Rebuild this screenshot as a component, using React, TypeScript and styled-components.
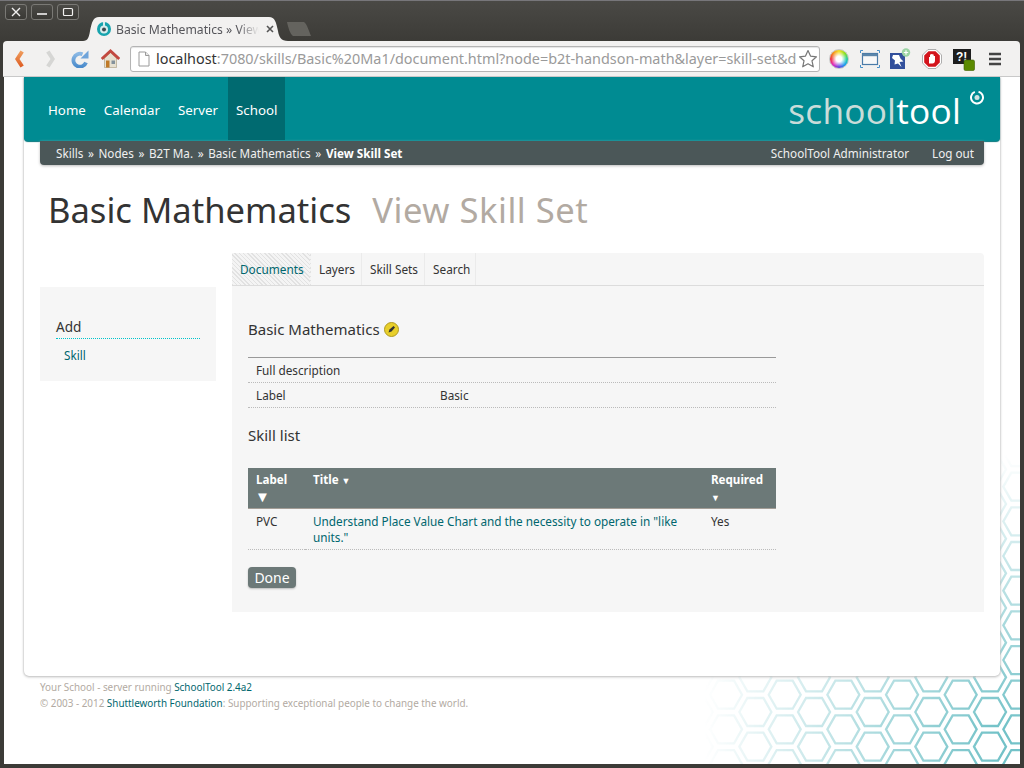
import React from 'react';
import styled, { createGlobalStyle } from 'styled-components';

const FONT = `"Noto Sans", "Open Sans", sans-serif`;

const Global = createGlobalStyle`
  html, body { margin: 0; padding: 0; background: #3c3b37; }
  body { font-family: ${FONT}; overflow: hidden; }
  * { box-sizing: border-box; }
`;

const Win = styled.div`
  width: 1024px; height: 768px; display: flex; flex-direction: column;
  background: linear-gradient(#4a4945 0, #3c3b37 40px);
  border-top: 1px solid #77767a; padding: 0 4px 4px 3px; overflow: hidden;
`;
const TitleBar = styled.div`
  height: 40px; display: flex; position: relative; flex: none;
`;
const WinButtons = styled.div`
  display: flex; gap: 4px; padding: 3px 0 0 2px; align-items: flex-start; width: 80px;
`;
const WinBtn = styled.div`
  width: 22px; height: 16px; border: 1px solid #7a7975; border-radius: 3px;
  background: linear-gradient(#4b4a46, #3a3935); display: flex; align-items: center; justify-content: center;
`;
const Tab = styled.div`
  width: 205px; height: 24px; margin-top: 16px; background: #f2f1f0; display: flex; align-items: center;
  padding-left: 14px; color: #55555a; font-size: 12.2px; white-space: nowrap;
  clip-path: path('M0 24 C5 24 6 20 7 14 C9 5 10 0 16 0 L186 0 C192 0 193 5 195 14 C196 20 198 24 205 24 Z');
`;
const TabTitle = styled.span`
  width: 143px; margin-left: 5px; overflow: hidden;
  -webkit-mask-image: linear-gradient(to right, #000 85%, transparent);
  mask-image: linear-gradient(to right, #000 85%, transparent);
`;
const TabClose = styled.div`
  margin-left: 7px; display: flex;
`;
const NewTab = styled.div`
  width: 24px; height: 14px; margin-top: 21px; margin-left: -1px; background: #64635e;
  clip-path: path('M0 0 L17 0 C20 2 22 9 24 14 L6 14 C3 12 1 5 0 0 Z');
`;
const Toolbar = styled.div`
  height: 36px; flex: none; background: #f2f1f0; border-radius: 4px 4px 0 0; display: flex; align-items: center;
  padding: 0 0 0 2px; border-bottom: 1px solid #c9c9c9;
`;
const NavIcons = styled.div`
  display: flex; width: 125px; align-items: center;
`;
const NavIcon = styled.div`
  width: 30px; height: 22px; display: flex; align-items: center; justify-content: center; flex: none;
`;
const Omnibox = styled.div`
  width: 690px; height: 26px; background: #fff; border: 1px solid #b4b4b4; border-radius: 3px;
  display: flex; align-items: center; padding-left: 7px; flex: none; box-shadow: inset 0 1px 1px #e4e4e4;
`;
const Url = styled.div`
  width: 641px; margin-left: 6px; overflow: hidden; white-space: nowrap; font-size: 14.4px; color: #9a9a9a; flex: none;
`;
const UrlHost = styled.span`
  color: #333;
`;
const StarWrap = styled.div`
  margin-left: 1px; display: flex;
`;
const ExtIcons = styled.div`
  display: flex; align-items: center; padding-left: 3px;
`;
const ExtIcon = styled.div`
  width: 31.2px; height: 24px; display: flex; align-items: center; justify-content: center; flex: none; position: relative;
`;
const Wheel = styled.div`
  width: 20px; height: 20px; border-radius: 50%;
  background: radial-gradient(circle, #fff 0 22%, transparent 62%), conic-gradient(#f5e020, #8ee020, #20d0a0, #20a0f0, #6040e0, #e030c0, #f03040, #f59020, #f5e020);
  border: 1px solid #c8c8c8;
`;
const Viewport = styled.div`
  flex: 1; background: #fff; position: relative; overflow: hidden; padding: 0 20px 0 20px;
  margin-left: 1px;
`;
const HexLayer = styled.svg`
  position: absolute; right: 0; bottom: 0; width: 316px; height: 310px;
  -webkit-mask-image: linear-gradient(to right, transparent 0, rgba(0,0,0,.95) 92%), linear-gradient(to bottom, transparent 0, #000 88%);
  -webkit-mask-composite: source-in;
  mask-image: linear-gradient(to right, transparent 0, rgba(0,0,0,.95) 92%), linear-gradient(to bottom, transparent 0, #000 88%);
  mask-composite: intersect;
`;
const Card = styled.div`
  position: relative; height: 599px; background: #fff; border-radius: 0 0 5px 5px;
  box-shadow: 0 0 2px #b8b8b8, 0 1px 3px #c4c4c4; padding: 0;
`;
const Header = styled.header`
  height: 64px; background: #008b92; border-radius: 0 0 4px 4px; display: flex; justify-content: space-between;
  box-shadow: 0 1px 1px #00757a; padding-left: 16px;
`;
const Nav = styled.nav`
  display: flex; gap: 2px;
`;
const NavItem = styled.a<{ $active?: boolean }>`
  height: 63px; display: flex; align-items: center; padding: 2px 8px 0; color: #fff; font-size: 13.3px;
  background: ${p => (p.$active ? '#006a70' : 'transparent')};
`;
const Logo = styled.div`
  display: flex; align-items: flex-start; padding-right: 15px; padding-top: 9px;
`;
const LogoText = styled.div`
  font-size: 35.3px; font-weight: 400; color: #fff; line-height: 48px; letter-spacing: .2px; font-family: "Open Sans", ${FONT};
`;
const LogoLight = styled.span`
  color: #c9dcd9;
`;
const LogoMark = styled.svg`
  width: 16px; height: 16px; margin: 3px 0 0 8px;
`;
const SubBar = styled.div`
  height: 24px; margin: 0 16px; background: #4b5758; border-radius: 0 0 4px 4px; display: flex; justify-content: space-between;
  align-items: center; padding: 0 10px 0 16px; color: #f0f0f0; font-size: 11.7px; box-shadow: 0 1px 3px #bbb;
`;
const Crumbs = styled.div`
  display: flex; gap: 4.6px;
`;
const Crumb = styled.span<{ $bold?: boolean }>`
  font-weight: ${p => (p.$bold ? 700 : 400)}; ${p => (p.$bold ? 'color:#fff;' : '')}
`;
const UserBox = styled.div`
  display: flex; gap: 23px;
`;
const TitleRow = styled.h1`
  margin: 0; height: 88px; padding: 22px 0 0 24px; display: flex; gap: 21px; font-weight: 400; font-size: 34.6px; color: #333; line-height: 46px;
`;
const TitleSub = styled.span`
  color: #b2aaa2; letter-spacing: .5px;
`;
const Columns = styled.div`
  display: flex; gap: 16px; padding: 0 16px;
`;
const Sidebar = styled.aside`
  width: 176px; height: 94px; margin-top: 34px; background: #f6f6f6; padding: 30px 16px 0;
`;
const SideTitle = styled.div`
  font-size: 13.6px; color: #333; line-height: 20px; padding-bottom: 1px; border-bottom: 1px dotted #00c4cc;
`;
const SideLink = styled.a`
  display: block; font-size: 11.7px; color: #00666e; padding: 8px 0 0 8px; line-height: 17px;
`;
const Content = styled.main`
  width: 752px; height: 359px; background: #f6f6f6; border-radius: 4px 4px 0 0;
`;
const Tabs = styled.div`
  display: flex; height: 33px; border-bottom: 1px solid #dcdcdc;
`;
const TabItem = styled.a<{ $active?: boolean; $w: number }>`
  width: ${p => p.$w}px; display: flex; align-items: center; padding-left: 8px; font-size: 11.8px; color: ${p => (p.$active ? '#00666e' : '#333')};
  border-right: 1px solid ${p => (p.$active ? 'transparent' : '#ebebeb')};
  background: ${p => (p.$active ? 'repeating-linear-gradient(45deg, #e2e2e2 0 1px, #f4f4f4 1px 3px)' : 'transparent')};
`;
const Body = styled.div`
  padding: 0 16px; width: 560px;
`;
const DocHeading = styled.h2`
  margin: 0; padding-top: 32px; height: 71px; display: flex; align-items: flex-start; gap: 4px; font-size: 15px; font-weight: 400; color: #333; line-height: 22px;
`;
const Pencil = styled.svg`
  width: 15px; height: 15px; margin-top: 4px;
`;
const Details = styled.div`
  border-top: 1px solid #999;
`;
const DetailRow = styled.div`
  display: grid; grid-template-columns: 184px 1fr; height: 25px; align-items: center; padding-left: 8px; font-size: 11.75px; color: #333;
  border-bottom: 1px dotted #bbb;
`;
const SkillHeading = styled.h3`
  margin: 0; height: 60px; padding-top: 16px; font-size: 15px; font-weight: 400; color: #333; line-height: 22px;
`;
const SkillGrid = styled.div`
  display: grid; grid-template-columns: 57px 398px 73px;
`;
const Th = styled.div`
  height: 41px; background: #6c7978; border-bottom: 1px solid #a39d96; padding: 3px 8px 0; color: #fff; font-weight: 700; font-size: 11.6px; line-height: 17px;
`;
const Td = styled.div`
  height: 41px; padding: 4px 8px 0; font-size: 11.75px; line-height: 16px; color: #333; border-bottom: 1px dotted #bbb;
`;
const SkillLink = styled.a`
  color: #00666e;
`;
const BigArrow = styled.span`
  display: block; font-size: 15px; line-height: 16px; font-weight: 400; margin-left: -1px;
`;
const SmallArrow = styled.span`
  font-size: 9px;
`;
const DoneButton = styled.button`
  display: block; margin-top: 17px; width: 48px; height: 21px; padding: 0; border: 0; border-radius: 4px; background: #6c7978; color: #fff;
  font: 400 14px ${FONT}; box-shadow: 0 1px 2px #bbb;
`;
const Footer = styled.footer`
  position: relative; padding: 3px 0 0 16px; font-size: 9.9px; line-height: 16px; color: #b2aaa2;
`;
const FootLink = styled.a`
  color: #00666e;
`;

const hexPts = (cx: number, cy: number) =>
  [[-16, 0], [-8, -14], [8, -14], [16, 0], [8, 14], [-8, 14]].map(([x, y]) => `${x + cx},${y + cy}`).join(' ');

const hexes: [number, number][] = [];
for (let c = -10; c <= 2; c++) {
  for (let r = -2; r <= 10; r++) {
    const x = 286 + c * 29.33;
    const y = 258 + (c % 2 === 0 ? 0 : -17.3) + (r - 7) * 34.67;
    hexes.push([x, y]);
  }
}

export default function App() {
  return (
    <>
      <Global />
      <Win>
        <TitleBar>
          <WinButtons>
            <WinBtn><svg width="10" height="10" viewBox="0 0 10 10"><path d="M1 1l8 8M9 1l-8 8" stroke="#f2f1f0" strokeWidth="1.4" /></svg></WinBtn>
            <WinBtn><svg width="10" height="10" viewBox="0 0 10 10"><path d="M0 7h10" stroke="#f2f1f0" strokeWidth="1.6" /></svg></WinBtn>
            <WinBtn><svg width="12" height="10" viewBox="0 0 12 10"><rect x="1.5" y="1.5" width="9" height="7" rx="1" fill="none" stroke="#f2f1f0" strokeWidth="1.2" /></svg></WinBtn>
          </WinButtons>
          <Tab>
            <svg width="14" height="14" viewBox="0 0 14 14"><circle cx="7" cy="7" r="7" fill="#17a3ad" /><circle cx="7" cy="7.5" r="4" fill="#d7ecec" /><circle cx="7" cy="7.5" r="2" fill="#3d4a50" /><rect x="6" y="0" width="2" height="4" fill="#d7ecec" /></svg>
            <TabTitle>Basic Mathematics » View Skill Set</TabTitle>
            <TabClose><svg width="8" height="8" viewBox="0 0 8 8"><path d="M1 1l6 6M7 1l-6 6" stroke="#555" strokeWidth="1.6" /></svg></TabClose>
          </Tab>
          <NewTab />
        </TitleBar>
        <Toolbar>
          <NavIcons>
            <NavIcon>
              <svg width="12" height="18" viewBox="0 0 12 18">
                <defs><linearGradient id="bk" x1="0" y1="0" x2="0" y2="1"><stop offset="0" stopColor="#f0a060" /><stop offset="1" stopColor="#dd5a20" /></linearGradient></defs>
                <path d="M6.500 0.500L9.800 2.500 5.500 9l4.300 6.500-3.300 2L1 9z" fill="url(#bk)" />
              </svg>
            </NavIcon>
            <NavIcon>
              <svg width="12" height="18" viewBox="0 0 12 18"><path d="M5.500 0.500L2.200 2.500 6.500 9l-4.300 6.500 3.300 2L11 9z" fill="#d6d6d4" /></svg>
            </NavIcon>
            <NavIcon>
              <svg width="18" height="19" viewBox="0 0 18 19">
                <defs><linearGradient id="rl" x1="0" y1="0" x2="0" y2="1"><stop offset="0" stopColor="#8ab8e4" /><stop offset="1" stopColor="#4c8ccc" /></linearGradient></defs>
                <path d="M15 13.500A6.500 6.500 0 1 1 11.500 5.200" fill="none" stroke="url(#rl)" strokeWidth="3.800" />
                <path d="M9.500 9.500h8V1.500z" fill="#6fa4da" />
              </svg>
            </NavIcon>
            <NavIcon>
              <svg width="19" height="19" viewBox="0 0 19 19"><path d="M3.500 9v9.500h12V9L9.500 3.500z" fill="#e6e0d0" stroke="#a89878" strokeWidth=".6" /><path d="M0.800 10L9.500 2l8.700 8" fill="none" stroke="#c2493f" strokeWidth="2.800" /><rect x="5" y="11.500" width="3.500" height="7" fill="#c07a28" /><rect x="10.500" y="11.500" width="3.500" height="3.500" fill="#84929c" /></svg>
            </NavIcon>
          </NavIcons>
          <Omnibox>
            <svg width="12" height="16" viewBox="0 0 12 16"><path d="M1 1h6.500L11 4.500V15H1z" fill="#fff" stroke="#9a9a9a" /><path d="M7.500 1v3.500H11" fill="#e8e8e8" stroke="#9a9a9a" /></svg>
            <Url><UrlHost>localhost</UrlHost>:7080/skills/Basic%20Ma1/document.html?node=b2t-handson-math&amp;layer=skill-set&amp;do</Url>
            <StarWrap>
              <svg width="20" height="19" viewBox="0 0 20 19"><path d="M10 1.500l2.500 5.600 6 .7-4.500 4 1.300 6L10 14.800l-5.300 3 1.300-6-4.500-4 6-.7z" fill="#fff" stroke="#777" strokeWidth="1.200" strokeLinejoin="round" /></svg>
            </StarWrap>
          </Omnibox>
          <ExtIcons>
            <ExtIcon><Wheel /></ExtIcon>
            <ExtIcon>
              <svg width="20" height="18" viewBox="0 0 20 18"><rect x="2.500" y="3.500" width="15" height="11" fill="#f8f8f8" stroke="#4a7ba8" strokeWidth="1.200" /><path d="M2.500 5h15" stroke="#5b86ab" strokeWidth="2.400" /><path d="M0.500 3V.5H3M17 .5h2.500V3M.5 15v2.500H3M17 17.500h2.500V15" fill="none" stroke="#4a90c8" /></svg>
            </ExtIcon>
            <ExtIcon>
              <svg width="21" height="21" viewBox="0 0 21 21"><rect x="0" y="5" width="15" height="16" fill="#33509c" /><path d="M3 7l6 0 1.500 3.500 3 3-4 .5 2 5-3.500-3.500-3.500 1 .5-4L2 10z" fill="#fff" /><circle cx="16" cy="4.500" r="4.200" fill="#9cd4a4" /><path d="M16 2.300v4.400M13.800 4.500h4.400" stroke="#fff" strokeWidth="1.200" /></svg>
            </ExtIcon>
            <ExtIcon>
              <svg width="20" height="20" viewBox="0 0 20 20"><path d="M6 .5h8L19.500 6v8L14 19.500H6L.5 14V6z" fill="#fff" stroke="#9a9a9a" strokeWidth=".8" /><path d="M6.500 2.200h7L17.800 6.500v7L13.500 17.800h-7L2.200 13.500v-7z" fill="#d3141c" /><path d="M7 14.500V8h1V5.500h1.200V5h1.300v.5h1.200V7h1.300v4.500c0 2-1 3-2.500 3z" fill="#fff" /></svg>
            </ExtIcon>
            <ExtIcon>
              <svg width="24" height="24" viewBox="0 0 24 24"><rect x="2" y="2" width="18" height="15" fill="#1e1e1e" /><text x="5" y="13.500" fontFamily="Liberation Sans, sans-serif" fontWeight="700" fontSize="12" fill="#fff">?!</text><rect x="13" y="13" width="10.500" height="10.500" rx="1.500" fill="#5b8a00" stroke="#3e6000" strokeWidth=".6" /></svg>
            </ExtIcon>
            <ExtIcon>
              <svg width="14" height="14" viewBox="0 0 14 14"><path d="M1 2h12M1 7h12M1 12h12" stroke="#444" strokeWidth="2.400" /></svg>
            </ExtIcon>
          </ExtIcons>
        </Toolbar>
        <Viewport>
          <HexLayer viewBox="0 0 316 310">
            {hexes.map(([x, y], i) => (
              <polygon key={i} points={hexPts(x, y)} fill="none" stroke="#6cbfc5" strokeWidth="2.300" />
            ))}
          </HexLayer>
          <Card>
            <Header>
              <Nav>
                <NavItem>Home</NavItem>
                <NavItem>Calendar</NavItem>
                <NavItem>Server</NavItem>
                <NavItem $active>School</NavItem>
              </Nav>
              <Logo>
                <LogoText><LogoLight>school</LogoLight>tool</LogoText>
                <LogoMark viewBox="0 0 16 16">
                  <circle cx="8" cy="8.500" r="6" fill="none" stroke="#fff" strokeWidth="2" strokeDasharray="33 5" transform="rotate(-75 8 8.500)" />
                  <circle cx="8" cy="8.500" r="2.500" fill="#cfe3e2" />
                </LogoMark>
              </Logo>
            </Header>
            <SubBar>
              <Crumbs>
                <Crumb>Skills</Crumb><Crumb>»</Crumb><Crumb>Nodes</Crumb><Crumb>»</Crumb><Crumb>B2T Ma.</Crumb><Crumb>»</Crumb><Crumb>Basic Mathematics</Crumb><Crumb>»</Crumb><Crumb $bold>View Skill Set</Crumb>
              </Crumbs>
              <UserBox>
                <span>SchoolTool Administrator</span>
                <span>Log out</span>
              </UserBox>
            </SubBar>
            <TitleRow>
              <span>Basic Mathematics</span>
              <TitleSub>View Skill Set</TitleSub>
            </TitleRow>
            <Columns>
              <Sidebar>
                <SideTitle>Add</SideTitle>
                <SideLink>Skill</SideLink>
              </Sidebar>
              <Content>
                <Tabs>
                  <TabItem $active $w={79}>Documents</TabItem>
                  <TabItem $w={51}>Layers</TabItem>
                  <TabItem $w={63}>Skill Sets</TabItem>
                  <TabItem $w={51}>Search</TabItem>
                </Tabs>
                <Body>
                  <DocHeading>
                    Basic Mathematics
                    <Pencil viewBox="0 0 15 15">
                      <circle cx="7.500" cy="7.500" r="7" fill="#e8cf2a" stroke="#b09a20" />
                      <path d="M4.500 10.500l1-3 4-3.500 1.500 1.500-3.500 4z" fill="#333" />
                    </Pencil>
                  </DocHeading>
                  <Details>
                    <DetailRow><span>Full description</span><span /></DetailRow>
                    <DetailRow><span>Label</span><span>Basic</span></DetailRow>
                  </Details>
                  <SkillHeading>Skill list</SkillHeading>
                  <SkillGrid>
                    <Th>Label<BigArrow>▼</BigArrow></Th>
                    <Th>Title <SmallArrow>▼</SmallArrow></Th>
                    <Th>Required <SmallArrow>▼</SmallArrow></Th>
                    <Td>PVC</Td>
                    <Td><SkillLink>Understand Place Value Chart and the necessity to operate in "like units."</SkillLink></Td>
                    <Td>Yes</Td>
                  </SkillGrid>
                  <DoneButton>Done</DoneButton>
                </Body>
              </Content>
            </Columns>
          </Card>
          <Footer>
            <div>Your School - server running <FootLink>SchoolTool 2.4a2</FootLink></div>
            <div>© 2003 - 2012 <FootLink>Shuttleworth Foundation</FootLink>: Supporting exceptional people to change the world.</div>
          </Footer>
        </Viewport>
      </Win>
    </>
  );
}
